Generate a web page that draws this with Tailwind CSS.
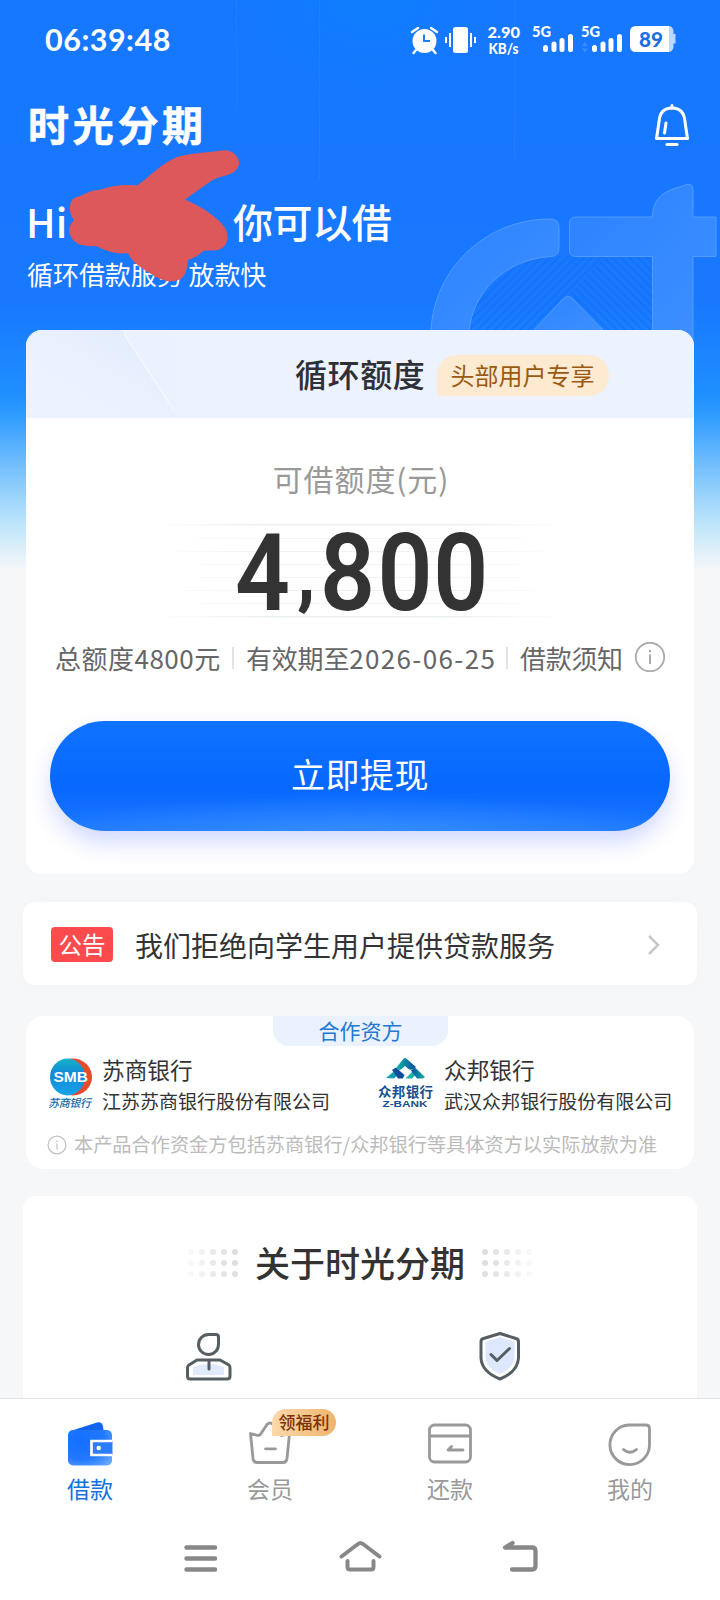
<!DOCTYPE html>
<html lang="zh-CN">
<head>
<meta charset="utf-8">
<meta name="viewport" content="width=720">
<title>时光分期</title>
<script src="https://cdn.jsdelivr.net/npm/@tailwindcss/browser@4"></script>
</head>
<body class="bg-[#f6f7f9]">
<div class="relative w-[720px] h-[1600px] overflow-hidden bg-[#f6f7f9] font-['Noto_Sans_CJK_SC',sans-serif] leading-none text-[#333] flex flex-col whitespace-nowrap">

  <!-- hero background -->
  <svg class="absolute left-0 top-0" width="720" height="600" viewBox="0 0 720 600">
    <defs>
      <linearGradient id="bg" x1="0" y1="0" x2="0" y2="1">
        <stop offset="0" stop-color="#1677ff"/><stop offset=".5" stop-color="#1878ff"/>
        <stop offset=".58" stop-color="#1b83ff"/><stop offset=".66" stop-color="#1f90ff"/>
        <stop offset=".7" stop-color="#359fff"/><stop offset=".76" stop-color="#66b8fd"/>
        <stop offset=".83" stop-color="#9dd5fb"/><stop offset=".88" stop-color="#c2e6fa"/>
        <stop offset=".95" stop-color="#f6f7f9"/>
      </linearGradient>
      <radialGradient id="glow"><stop offset="0" stop-color="#0784ff"/><stop offset="1" stop-color="#0784ff" stop-opacity="0"/></radialGradient>
      <linearGradient id="wm" x1="0" y1="0" x2="1" y2="1"><stop offset="0" stop-color="#2c82ff"/><stop offset="1" stop-color="#3f90ff"/></linearGradient>
      <pattern id="hl" width="6" height="6" patternUnits="userSpaceOnUse" patternTransform="rotate(-45)"><rect width="6" height="2" fill="#0f68ee" opacity=".4"/></pattern>
      <pattern id="hr" width="6" height="6" patternUnits="userSpaceOnUse" patternTransform="rotate(45)"><rect width="6" height="2" fill="#0f68ee" opacity=".4"/></pattern>
    </defs>
    <rect width="720" height="600" fill="url(#bg)"/>
    <ellipse cx="370" cy="0" rx="150" ry="100" fill="url(#glow)" opacity=".5"/>
    <path d="M236.500 0V110M319.500 0V180M514.500 0V160" stroke="#4aa0ff" opacity=".16"/>
    <path d="M469 330C472 290 505 257 553 256H610L535 330Z" fill="url(#hl)"/>
    <path d="M604 256H652V330H600L568 296Z" fill="url(#hr)"/>
    <g fill="url(#wm)" stroke="#529bff" stroke-width="1">
      <path d="M431 332C433 270 485 219 550 219Q559 219 559 227V248Q559 256 551 256.500C506 259 472 292 469 332Z"/>
      <path d="M576 217H652.500C652.500 200 662 193 673 189L687 184.500Q693 183 693 190V217H716V256.500H693V345H652.500V256.500H576Q569.500 256.500 569.500 250V224Q569.500 217 576 217Z"/>
      <path d="M533 331L563 299Q568 294 573 299L604 331Z"/>
    </g>
  </svg>

  <!-- status bar -->
  <div class="relative h-[80px] pl-[45px] pr-[43px] flex items-center justify-between text-white">
    <span class="font-[Lato] font-bold text-[30.500px] tracking-[0.500px] -mt-[2px]">06:39:48</span>
    <svg width="268" height="32" viewBox="409 24 268 32" fill="#fff" class="font-[Lato] font-black">
      <circle cx="424.500" cy="41" r="12"/>
      <path d="M412 32L418 28M437 32L431 28M416 50L413.500 53M433 50L435.500 53" stroke="#fff" stroke-width="2.500" stroke-linecap="round"/>
      <path d="M424 34.500V41H430" fill="none" stroke="#1f7cff" stroke-width="2"/>
      <rect x="453" y="27" width="15" height="26" rx="2.500"/>
      <path d="M450 33V47M446 37V43M471 33V47M475 37V43" stroke="#fff" stroke-width="2" />
      <text x="487.500" y="38" font-size="15.500" textLength="32.500" lengthAdjust="spacingAndGlyphs">2.90</text>
      <text x="488.500" y="53.500" font-size="14.500" textLength="30" lengthAdjust="spacingAndGlyphs">KB/s</text>
      <text x="532" y="37" font-size="14.500" textLength="19" lengthAdjust="spacingAndGlyphs">5G</text>
      <text x="581" y="37" font-size="14.500" textLength="19" lengthAdjust="spacingAndGlyphs">5G</text>
      <g stroke="#fff" stroke-width="5" stroke-linecap="round">
        <path d="M545.500 47.500V49.500M554 44V49.500M562 40.500V49.500M570.500 36.500V49.500"/>
        <path d="M594.500 47.500V49.500M603 44V49.500M611 40.500V49.500M619.500 36.500V49.500"/>
      </g>
      <path d="M582 46L585 42L588 46ZM582 48.500L585 52.500L588 48.500Z" fill="#3c8eff"/>
      <path d="M664 26H668Q673 26 673.500 31V34H675.500V43.500H673.500V47Q673 52 668 52H664Z" fill="#bcd7ff"/>
      <path d="M636 26H669V52H636Q630 52 630 46V32Q630 26 636 26Z"/>
      <text x="639" y="46.500" font-size="21" textLength="24" lengthAdjust="spacingAndGlyphs" fill="#1f6fe0">89</text>
    </svg>
  </div>

  <!-- app bar -->
  <div class="relative h-[90px] pl-[28px] pr-[29px] flex items-center justify-between text-white">
    <span class="font-bold text-[41px] tracking-[3.700px] mb-[4px] [-webkit-text-stroke:0.600px_#fff]">时光分期</span>
    <svg class="-mt-[1px]" width="38" height="46" viewBox="653 102 38 46" fill="none" stroke="#fff" stroke-width="3" stroke-linecap="round" stroke-linejoin="round">
      <path d="M672 108C663 108 659.500 114 659 122L656.500 138.500H687.500L685 122C684.500 114 681 108 672 108Z"/>
      <path d="M672 108V105.500M666 123L664.500 133"/><path d="M667 144.500H677"/>
    </svg>
  </div>

  <!-- greeting -->
  <div class="relative h-[160px] px-[27px] pt-[31px] text-white">
    <div class="flex text-[40px] font-medium"><span class="w-[207px] -ml-[1px]">Hi</span><span class="tracking-[-0.400px]">你可以借</span></div>
    <div class="mt-[20px] text-[26px] tracking-[-0.050px]">循环借款服务 放款快</div>
    <svg class="absolute left-[60px] top-[-30px]" width="190" height="150" viewBox="60 140 190 150">
      <path fill="#dc585b" d="M137 185.500C150 177 160 164 177 157C190 153 205 153 222 150.500C235 149 243 161 237 169C232 176 221 175 211 181L185 199.500C198 205 213 214 222 224C230 232 230 246 218 250C212 251 207 250 203 251C199 256 193 258 188 260C187 266 187 273 182 278C174 284 162 281 154 276C146 270 132 264 128 253C116 255 104 250 96 246C86 247 75 245 71 237C67 230 70 224 74 220C68 213 68 201 76 197C84 196 88 190 99 190C110 186 124 184 137 185.500Z"/>
    </svg>
  </div>

  <!-- quota card -->
  <section class="relative mx-[26px] h-[544px] rounded-[16px] bg-white overflow-hidden flex flex-col items-center shrink-0">
    <div class="relative w-full h-[88px] bg-[#ecf2fe] flex items-center pl-[269px]">
      <svg class="absolute left-0 top-0" width="260" height="87"><defs>
        <linearGradient id="sh" x1="0" y1="1" x2="1" y2="0"><stop offset=".3" stop-color="#dde9fd" stop-opacity="0"/><stop offset="1" stop-color="#d9e6fc"/></linearGradient></defs>
        <path d="M0 0H96L150 87H0Z" fill="url(#sh)" opacity=".6"/><path d="M98 4L148 80" stroke="#f8fbff" stroke-width="1.500" opacity=".7"/></svg>
      <span class="relative text-[32px] tracking-[0.600px] font-medium text-[#2d3036] -mt-[2px]">循环额度</span>
      <span class="relative ml-[12px] mt-[2px] w-[172px] h-[41px] rounded-[20px] rounded-bl-[3px] bg-[#fdead1] text-[#9a5a12] text-[24px] flex items-center pl-[13px] pb-[1px]">头部用户专享</span>
    </div>
    <div class="mt-[45px] text-[30px] tracking-[0.900px] text-[#999] ml-[2px]">可借额度(元)</div>
    <svg class="mt-[24px] overflow-visible" width="440" height="110" viewBox="140 515 440 110">
      <defs><linearGradient id="fade"><stop offset="0" stop-color="#e9eef1" stop-opacity="0"/><stop offset=".3" stop-color="#e9eef1"/><stop offset=".7" stop-color="#e9eef1"/><stop offset="1" stop-color="#e9eef1" stop-opacity="0"/></linearGradient></defs>
      <g fill="url(#fade)"><rect x="150" y="522" width="420" height="1.500"/><rect x="150" y="536" width="420" height="1" opacity=".6"/><rect x="150" y="549" width="420" height="1" opacity=".8"/><rect x="150" y="562" width="420" height="1" opacity=".6"/><rect x="150" y="575" width="420" height="1" opacity=".6"/><rect x="150" y="588" width="420" height="1" opacity=".8"/><rect x="150" y="601" width="420" height="1" opacity=".6"/><rect x="150" y="614" width="420" height="1.500"/></g>
      <g transform="translate(0 607.500) scale(.9 1)" fill="#333" font-family="Roboto" font-weight="600" font-size="107"><text y="0"><tspan x="261">4</tspan><tspan x="330" y="-11" font-size="76" font-weight="900">,</tspan><tspan x="355.500 419.500 481.500" y="0">800</tspan></text></g>
    </svg>
    <div class="mt-[15px] w-full flex items-center text-[26px] text-[#666] pl-[29px] h-[32px]">
      <span class="tracking-[0.500px] w-[177px]">总额度4800元</span>
      <i class="w-[2px] h-[22px] bg-[#e3e3e3] mr-[12px]"></i>
      <span class="w-[260px]"><span class="tracking-[-0.200px]">有效期至</span><span class="tracking-[1.350px]">2026-06-25</span></span>
      <i class="w-[2px] h-[22px] bg-[#e3e3e3] mr-[12px]"></i>
      <span class="tracking-[-0.300px] w-[114px]">借款须知</span>
      <svg width="32" height="32" viewBox="0 0 32 32" fill="none" stroke="#aaa" stroke-width="1.800"><circle cx="16" cy="15" r="14.200"/><path d="M16 12.500V22M16 8V10.300" stroke-width="2"/></svg>
    </div>
    <button class="mt-[47px] w-[620px] h-[110px] shrink-0 rounded-full bg-[radial-gradient(ellipse_60%_40%_at_50%_108%,#3a90ff,transparent),linear-gradient(180deg,#0f73ff,#0767ff_60%,#1c78ff)] shadow-[0_12px_24px_-2px_rgba(40,80,255,0.24)] text-white text-[34px] tracking-[0.500px] font-normal flex items-center justify-center pb-[4px]">立即提现</button>
  </section>

  <!-- notice -->
  <section class="relative mt-[28px] mx-[23px] h-[83px] shrink-0 rounded-[12px] bg-white shadow-[0_2px_16px_rgba(0,0,0,0.02)] flex items-center pl-[28px] pr-[37px]">
    <span class="w-[62px] h-[35px] mt-[2px] rounded-[4px] bg-[#fb4b4d] text-white text-[23.500px] flex items-center justify-center">公告</span>
    <span class="ml-[22px] text-[28px] mt-[2px]">我们拒绝向学生用户提供贷款服务</span>
    <svg class="ml-auto mt-[2px]" width="12" height="22" viewBox="0 0 12 22" fill="none" stroke="#c8c8c8" stroke-width="2.500"><path d="M1 2L10 11L1 20"/></svg>
  </section>

  <!-- funding partners -->
  <section class="relative mt-[31px] mx-[26px] h-[153px] shrink-0 rounded-[18px] bg-white flex flex-col">
    <div class="ml-[247px] w-[175px] h-[30px] rounded-b-[16px] bg-[#eaf2fe] text-[#2478d2] text-[21px] flex items-center justify-center pb-[1px]">合作资方</div>
    <div class="flex pl-[21px] mt-[10px] h-[56px]">
      <svg width="46" height="54" viewBox="47 1056 46 54">
        <defs><linearGradient id="smb" x1="0" y1="0" x2="0" y2="1"><stop offset="0" stop-color="#17b4c8"/><stop offset=".4" stop-color="#1188d8"/><stop offset="1" stop-color="#15a4e8"/></linearGradient></defs>
        <ellipse cx="73" cy="1077" rx="19" ry="18.500" fill="#e84a2c"/><ellipse cx="67.500" cy="1077" rx="17.500" ry="18.500" fill="url(#smb)"/>
        <text x="53.500" y="1081.500" fill="#fff" font-family="Liberation Sans" font-weight="700" font-size="14" textLength="34.500" lengthAdjust="spacingAndGlyphs">SMB</text>
        <text x="48" y="1106.500" fill="#1668a8" font-size="11" font-style="italic" font-weight="500" textLength="43">苏商银行</text>
      </svg>
      <div class="ml-[9px] w-[274px]"><div class="text-[22.700px] mt-[3px]">苏商银行</div><div class="text-[19px] mt-[9px]">江苏苏商银行股份有限公司</div></div>
      <svg width="60" height="54" viewBox="376 1056 60 54">
        <defs><linearGradient id="zb"><stop offset="0" stop-color="#0b4a9c"/><stop offset="1" stop-color="#12b5a6"/></linearGradient><linearGradient id="zc"><stop offset="0" stop-color="#12b5a6"/><stop offset="1" stop-color="#0b4a9c"/></linearGradient></defs>
        <path d="M396.500 1067.500L403.500 1058.700Q405 1057.500 406.500 1058.700L416 1067Q412 1071 408.500 1069L405 1066L401.500 1069Q398 1071.500 396.500 1067.500Z" fill="url(#zc)"/>
        <path d="M386 1078L395 1070.500L399 1074L394 1078.500Z" fill="#159fae"/><path d="M392 1070L396 1067.500L404.500 1075L403 1078.500H398Z" fill="#0d4d9b"/>
        <path d="M405.500 1078.500L412.500 1071.500L416 1074.500L412 1078.500Z" fill="#19b4a8"/><path d="M411 1070.500L415 1067.500L425 1077L423 1078.500H417Z" fill="url(#zb)"/>
        <text x="378" y="1096.500" fill="#14508f" font-size="13.500" font-weight="700" textLength="55">众邦银行</text>
        <text x="382.500" y="1106.500" fill="#14508f" font-family="Liberation Sans" font-size="8.500" font-weight="700" textLength="45" lengthAdjust="spacingAndGlyphs">Z-BANK</text>
      </svg>
      <div class="ml-[8px]"><div class="text-[22.700px] mt-[3px]">众邦银行</div><div class="text-[19.050px] mt-[9px]">武汉众邦银行股份有限公司</div></div>
    </div>
    <div class="flex items-center pl-[21px] mt-[23px] text-[19.200px] text-[#bbb]">
      <svg class="mr-[7px]" width="20" height="20" viewBox="0 0 20 20" fill="none" stroke="#c0c0c0" stroke-width="1.200"><circle cx="10" cy="10" r="8.900"/><path d="M10 8.500V14.500M10 5.500V7"/></svg>
      <span>本产品合作资金方包括苏商银行/众邦银行等具体资方以实际放款为准</span>
    </div>
  </section>

  <!-- about -->
  <section class="relative mt-[27px] mx-[23px] h-[202px] shrink-0 rounded-t-[12px] bg-white">
    <div class="flex items-center justify-center pt-[50px]">
      <svg width="52" height="30" viewBox="0 0 52 30" fill="#dfdfdf"><g id="col"><circle cx="48" cy="4" r="3"/><circle cx="48" cy="15" r="3"/><circle cx="48" cy="26" r="3"/></g><use href="#col" x="-11" opacity=".85"/><use href="#col" x="-22" opacity=".65"/><use href="#col" x="-33" opacity=".4"/><use href="#col" x="-44" opacity=".2"/></svg>
      <h2 class="mx-[16px] text-[35px] font-medium -mt-[2px]">关于时光分期</h2>
      <svg class="-scale-x-100" width="52" height="30" viewBox="0 0 52 30" fill="#dfdfdf"><use href="#col"/><use href="#col" x="-11" opacity=".85"/><use href="#col" x="-22" opacity=".65"/><use href="#col" x="-33" opacity=".4"/><use href="#col" x="-44" opacity=".2"/></svg>
    </div>
    <div class="flex pl-[161px] mt-[51px]">
      <svg width="50" height="52" viewBox="184 1330 50 52" fill="none" stroke="#555e63" stroke-width="3" stroke-linejoin="round" stroke-linecap="round"><path d="M193 1372V1367Q208 1361 224 1367V1375H193Z" fill="#e1e9fd" stroke="none"/><path d="M208.500 1334.500H216Q218.500 1334.500 218.500 1337V1344A10 10 0 1 1 208.500 1334.500Z"/><path d="M197 1360H220L229 1365Q230 1366 230 1368V1376Q230 1379 227 1379H190Q187.500 1379 187.500 1376V1368Q187.500 1366 189 1365ZM209 1361V1369"/></svg>
      <svg class="ml-[244px]" width="44" height="52" viewBox="478 1329 44 52" fill="none" stroke="#555e63" stroke-width="3" stroke-linejoin="round" stroke-linecap="round"><path d="M500 1336L514.500 1341V1357Q513 1367 500 1373Q486 1367 485.500 1357V1341Z" fill="#dde7fd" stroke="none"/><path d="M500 1332.500L516 1337.500Q518.500 1338 518.500 1341V1357C518 1367 510 1374 500 1378C490 1374 481.500 1367 481 1357V1341Q481 1338 483.500 1337.500ZM491 1353.500L497 1359.500L509.500 1347.500"/></svg>
    </div>
  </section>

  <!-- tab bar -->
  <nav class="relative h-[118px] shrink-0 bg-white border-t border-[#e4e4e4] grid grid-cols-4 text-[23px] text-[#999]">
    <div class="flex flex-col items-center pt-[20px] text-[#1272e0]">
      <svg width="50" height="48" viewBox="65 1418.500 50 48"><defs><radialGradient id="w" cx=".3" cy=".3" r=".9"><stop offset="0" stop-color="#126fff"/><stop offset=".6" stop-color="#2379ff"/><stop offset="1" stop-color="#68a8ff"/></radialGradient></defs>
        <path d="M72 1430L97 1422Q102 1421 103 1426L104 1432Z" fill="#1064ee"/><rect x="68" y="1429.500" width="44" height="35.500" rx="5" fill="url(#w)"/><path d="M112.500 1440.500H91.500V1454.500H112.500" fill="#2a7dfb" stroke="#fff" stroke-width="2.600"/><circle cx="98.700" cy="1447.500" r="2.200" fill="#fff"/></svg>
      <span class="mt-[10px]">借款</span></div>
    <div class="relative flex flex-col items-center pt-[20px]">
      <svg width="50" height="48" viewBox="245 1418.500 50 48" fill="none" stroke="#999" stroke-width="2.800" stroke-linejoin="round" stroke-linecap="round"><path d="M250.500 1433L258 1435Q260 1435 261 1433L267 1424Q270 1421 273 1424L279 1433Q280 1435 282 1435L289.500 1433L287 1458Q286.500 1462 283 1462H257Q253.500 1462 253 1458ZM265.500 1448.300H275.500"/></svg>
      <span class="absolute left-[92px] top-[10px] w-[64px] h-[27px] rounded-full rounded-bl-[5px] bg-linear-to-r from-[#fbd9ab] to-[#efb46c] text-[#7c3205] text-[17px] font-medium flex items-center justify-center pb-[2px]">领福利</span>
      <span class="mt-[10px]">会员</span></div>
    <div class="flex flex-col items-center pt-[20px]">
      <svg width="50" height="48" viewBox="425 1418.500 50 48" fill="none" stroke="#999" stroke-width="2.800" stroke-linejoin="round" stroke-linecap="round"><rect x="429.500" y="1424.500" width="41" height="37" rx="5"/><path d="M430 1435.500H470M463 1449.500H448L451.500 1446"/></svg>
      <span class="mt-[10px]">还款</span></div>
    <div class="flex flex-col items-center pt-[20px]">
      <svg width="50" height="48" viewBox="605 1418.500 50 48" fill="none" stroke="#999" stroke-width="2.800" stroke-linejoin="round" stroke-linecap="round"><path d="M629 1424.500H646Q649.500 1424.500 649.500 1428V1444A19.800 19.800 0 1 1 629 1424.500ZM623.500 1449Q630 1454.500 636.500 1449"/></svg>
      <span class="mt-[10px]">我的</span></div>
  </nav>

  <!-- system navigation -->
  <div class="relative h-[84px] shrink-0 bg-white flex pt-[20px] pl-[180px] gap-[116px]">
    <svg width="41" height="44" viewBox="180 1536 41 44" stroke="#888" stroke-width="4.500" stroke-linecap="round"><path d="M186.500 1547.500H215M186.500 1558.500H215M186.500 1569.500H215"/></svg>
    <svg width="46" height="44" viewBox="337 1536 46 44" fill="none" stroke="#888" stroke-width="4" stroke-linecap="round" stroke-linejoin="round"><path d="M341.500 1556.500L358 1544Q360.500 1542 363 1544L379.500 1556.500M347.500 1561V1567Q347.500 1569.500 350 1569.500H371Q373.500 1569.500 373.500 1567V1561"/></svg>
    <svg width="42" height="44" viewBox="499 1536 42 44" fill="none" stroke="#888" stroke-width="4.300" stroke-linecap="round" stroke-linejoin="round"><path d="M512.500 1543L505 1547.500H532Q535.500 1547.500 535.500 1551V1566Q535.500 1569.500 532 1569.500H512"/></svg>
  </div>
</div>
</body>
</html>
